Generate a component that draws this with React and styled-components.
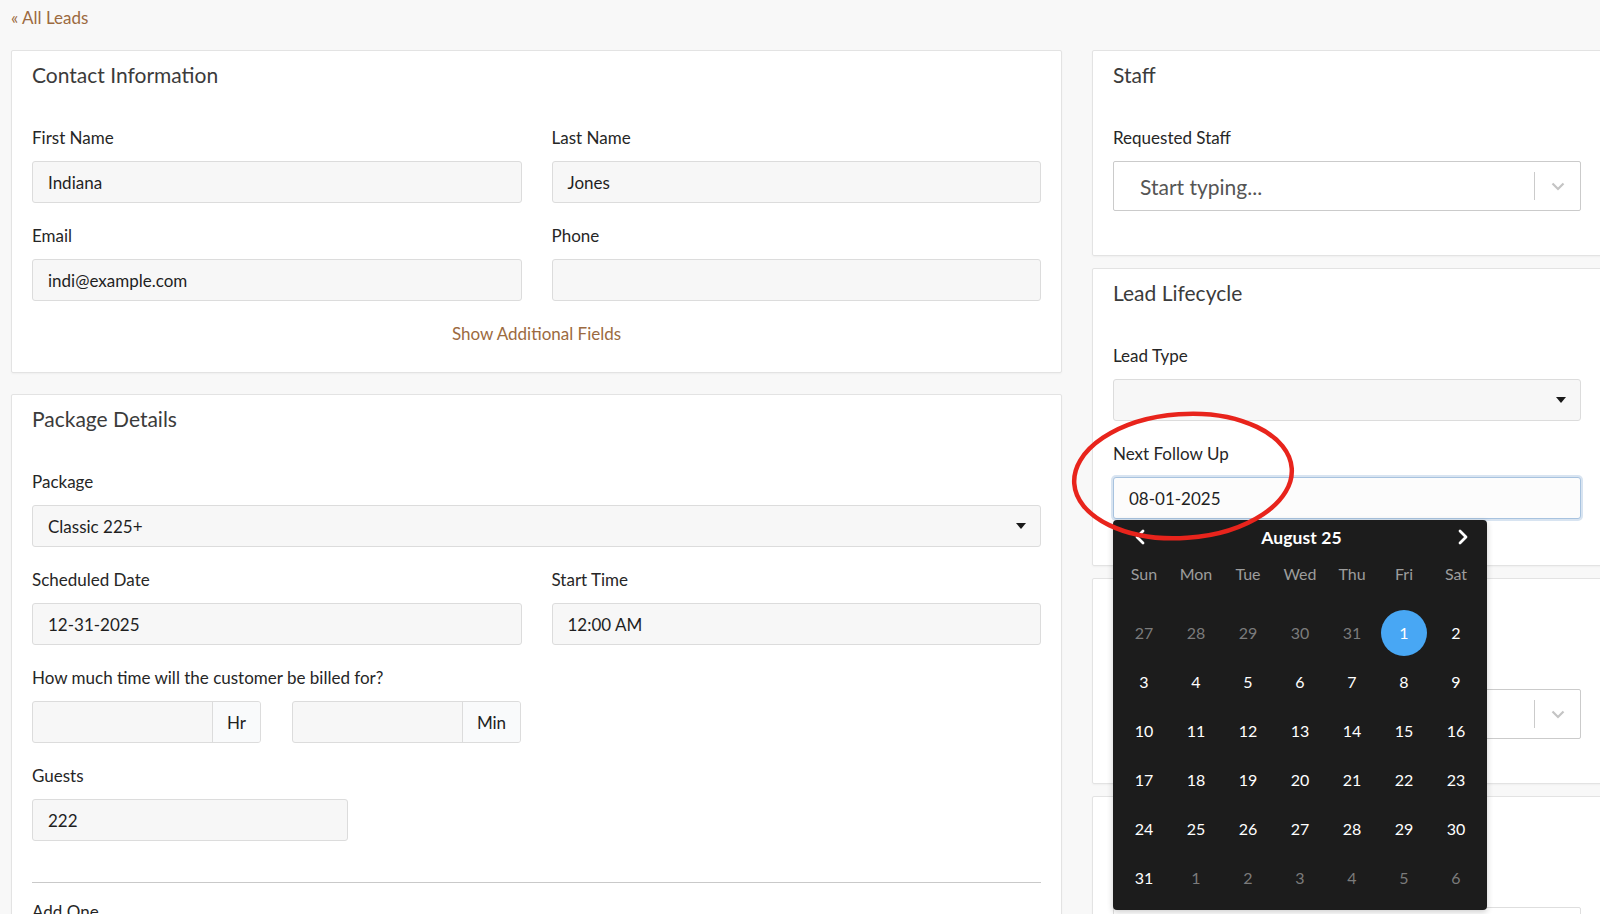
import React from 'react';
import styled, { createGlobalStyle } from 'styled-components';

const GlobalStyle = createGlobalStyle`
	body {
		margin: 0;
		background: #f8f8f8;
		font-family: Lato, 'Liberation Sans', Arial, sans-serif;
		color: #222;
	}
	* {
		box-sizing: border-box;
	}
`;

const weekDays = ['Sun', 'Mon', 'Tue', 'Wed', 'Thu', 'Fri', 'Sat'];

// august 2025, with the trailing days of july and september
const monthDays = [
	...[27, 28, 29, 30, 31].map((d) => ({ d, out: true })),
	...Array.from({ length: 31 }, (_, i) => ({ d: i + 1, selected: i === 0 })),
	...[1, 2, 3, 4, 5, 6].map((d) => ({ d, out: true })),
];

const CaretDown = () => <Caret />;

const ChevronDown = () => (
	<svg width='14' height='9' viewBox='0 0 14 9'>
		<polyline points='1.5,1.5 7,7 12.5,1.5' fill='none' stroke='#c4c4c4' strokeWidth='2.2' />
	</svg>
);

const Chevron = ({ dir }) => (
	<svg width='10' height='16' viewBox='0 0 10 16'>
		<polyline
			points={dir === 'left' ? '8,2 2,8 8,14' : '2,2 8,8 2,14'}
			fill='none'
			stroke='#fff'
			strokeWidth='2.8'
			strokeLinecap='round'
			strokeLinejoin='round'
		/>
	</svg>
);

const DatePicker = () => (
	<Calendar>
		<CalendarHead>
			<NavButton>
				<Chevron dir='left' />
			</NavButton>
			<MonthTitle>August 25</MonthTitle>
			<NavButton>
				<Chevron dir='right' />
			</NavButton>
		</CalendarHead>
		<WeekRow>
			{weekDays.map((w) => (
				<WeekDay key={w}>{w}</WeekDay>
			))}
		</WeekRow>
		<DayGrid>
			{monthDays.map((day, i) => (
				<DayCell key={i} $out={day.out}>
					{day.selected ? <SelectedDay>{day.d}</SelectedDay> : day.d}
				</DayCell>
			))}
		</DayGrid>
	</Calendar>
);

// cards further down the right column, mostly hidden by the open date picker
const HiddenCard = ({ plain }) => (
	<Card>
		<CardTitle aria-hidden />
		<Field $mb={18}>
			<Label aria-hidden />
			<Combo $plain={plain}>
				<Placeholder />
				{!plain && <ComboSep />}
				{!plain && (
					<ComboArrow>
						<ChevronDown />
					</ComboArrow>
				)}
			</Combo>
		</Field>
	</Card>
);

const App = () => {
	return (
		<Page>
			<GlobalStyle />
			<BackLink href='#'>« All Leads</BackLink>
			<Columns>
				<Column $gap={21}>
					<Card $pb={28}>
						<CardTitle>Contact Information</CardTitle>
						<Row>
							<Field>
								<Label>First Name</Label>
								<TextBox>Indiana</TextBox>
							</Field>
							<Field>
								<Label>Last Name</Label>
								<TextBox>Jones</TextBox>
							</Field>
						</Row>
						<Row>
							<Field>
								<Label>Email</Label>
								<TextBox>indi@example.com</TextBox>
							</Field>
							<Field>
								<Label>Phone</Label>
								<TextBox />
							</Field>
						</Row>
						<MoreLink href='#'>Show Additional Fields</MoreLink>
					</Card>

					<Card>
						<CardTitle>Package Details</CardTitle>
						<Field>
							<Label>Package</Label>
							<TextBox>
								<Grow>Classic 225+</Grow>
								<CaretDown />
							</TextBox>
						</Field>
						<Row>
							<Field>
								<Label>Scheduled Date</Label>
								<TextBox>12-31-2025</TextBox>
							</Field>
							<Field>
								<Label>Start Time</Label>
								<TextBox>12:00 AM</TextBox>
							</Field>
						</Row>
						<Field>
							<Label>How much time will the customer be billed for?</Label>
							<DurationRow>
								<InputGroup>
									<GroupInput />
									<Addon $width={48}>Hr</Addon>
								</InputGroup>
								<InputGroup>
									<GroupInput />
									<Addon $width={58}>Min</Addon>
								</InputGroup>
							</DurationRow>
						</Field>
						<Field $mb={41}>
							<Label>Guests</Label>
							<TextBox $width={316}>222</TextBox>
						</Field>
						<Divider />
						<Field>
							<Label>Add One</Label>
							<TextBox />
						</Field>
					</Card>
				</Column>

				<Column $gap={12}>
					<Card>
						<CardTitle>Staff</CardTitle>
						<Field $mb={18}>
							<Label>Requested Staff</Label>
							<Combo>
								<Placeholder>Start typing...</Placeholder>
								<ComboSep />
								<ComboArrow>
									<ChevronDown />
								</ComboArrow>
							</Combo>
						</Field>
					</Card>

					<Card>
						<CardTitle>Lead Lifecycle</CardTitle>
						<Field>
							<Label>Lead Type</Label>
							<TextBox>
								<Grow />
								<CaretDown />
							</TextBox>
						</Field>
						<PickerField>
							<Label>Next Follow Up</Label>
							<TextBox $focused>08-01-2025</TextBox>
							<DatePicker />
						</PickerField>
					</Card>

					<HiddenCard />
					<HiddenCard plain />
				</Column>
			</Columns>

			<Annotation width='236' height='142' viewBox='0 0 236 142'>
				<ellipse
					cx='118'
					cy='71'
					rx='109'
					ry='62'
					fill='none'
					stroke='#e8241c'
					strokeWidth='4.5'
					transform='rotate(-4 118 71)'
				/>
			</Annotation>
		</Page>
	);
};

export default App;

const Page = styled.div`
	position: relative;
	height: 914px;
	overflow: hidden;
	padding: 8px 0 0 11px;
`;

const BackLink = styled.a`
	display: block;
	height: 20px;
	margin-bottom: 22px;
	font-size: 17px;
	line-height: 20px;
	color: #9c6a40;
	text-decoration: none;
`;

const Columns = styled.div`
	display: grid;
	grid-template-columns: 1051px 510px;
	column-gap: 30px;
	align-items: start;
`;

const Column = styled.div`
	display: flex;
	flex-direction: column;
	gap: ${(p) => p.$gap}px;
`;

const Card = styled.section`
	background: #fff;
	border: 1px solid #e3e3e3;
	border-radius: 2px;
	box-shadow: 0 1px 2px rgba(0, 0, 0, 0.04);
	padding: 12px 20px ${(p) => p.$pb || 26}px;
`;

const CardTitle = styled.h2`
	height: 24px;
	margin: 0 0 41px;
	font-size: 21px;
	line-height: 24px;
	font-weight: 400;
	color: #3b3b3b;
`;

const Row = styled.div`
	display: grid;
	grid-template-columns: 1fr 1fr;
	column-gap: 30px;
`;

const Field = styled.div`
	margin-bottom: ${(p) => (p.$mb !== undefined ? p.$mb : 23)}px;
`;

const PickerField = styled(Field)`
	position: relative;
	margin-bottom: 20px;
`;

const Label = styled.label`
	display: block;
	height: 20px;
	margin-bottom: 13px;
	font-size: 17px;
	line-height: 20px;
	color: #262626;
`;

const TextBox = styled.div`
	display: flex;
	align-items: center;
	width: ${(p) => (p.$width ? `${p.$width}px` : '100%')};
	height: 42px;
	padding: 0 14px 0 15px;
	background: ${(p) => (p.$focused ? '#fcfcfc' : '#f7f7f7')};
	border: 1px solid ${(p) => (p.$focused ? '#a8c3df' : '#dcdcdc')};
	border-radius: 3px;
	box-shadow: ${(p) => (p.$focused ? '0 0 0 2px rgba(168, 195, 223, 0.45)' : 'none')};
	font-size: 17px;
	color: #1f1f1f;
`;

const Grow = styled.span`
	flex: 1;
`;

const Caret = styled.span`
	width: 0;
	height: 0;
	border-left: 5px solid transparent;
	border-right: 5px solid transparent;
	border-top: 6px solid #1a1a1a;
`;

const MoreLink = styled.a`
	display: block;
	text-align: center;
	font-size: 17px;
	line-height: 20px;
	color: #9c6a40;
	text-decoration: none;
`;

const DurationRow = styled.div`
	display: grid;
	grid-template-columns: 229px 229px;
	column-gap: 31px;
`;

const InputGroup = styled.div`
	display: flex;
	height: 42px;
	border: 1px solid #dcdcdc;
	border-radius: 3px;
	background: #f7f7f7;
	overflow: hidden;
`;

const GroupInput = styled.div`
	flex: 1;
`;

const Addon = styled.div`
	display: flex;
	align-items: center;
	justify-content: center;
	width: ${(p) => p.$width}px;
	border-left: 1px solid #dcdcdc;
	background: #f9fafb;
	font-size: 17px;
	color: #222;
`;

const Divider = styled.hr`
	margin: 0 0 19px;
	border: 0;
	border-top: 1px solid #c9c9c9;
`;

const Combo = styled.div`
	display: flex;
	align-items: center;
	height: 50px;
	background: #fff;
	border: 1px solid ${(p) => (p.$plain ? '#dedede' : '#cbcbcb')};
	border-radius: 2px;
`;

const Placeholder = styled.span`
	flex: 1;
	padding-left: 26px;
	font-size: 21px;
	color: #555;
`;

const ComboSep = styled.span`
	width: 1px;
	height: 28px;
	background: #cbcbcb;
`;

const ComboArrow = styled.span`
	display: flex;
	align-items: center;
	justify-content: center;
	width: 45px;
`;

const Calendar = styled.div`
	position: absolute;
	top: 76px;
	left: 0;
	z-index: 5;
	width: 374px;
	padding: 0 5px 8px;
	background: #1c1c1c;
	border-radius: 4px;
	box-shadow: 0 2px 6px rgba(0, 0, 0, 0.2);
	color: #fff;
`;

const CalendarHead = styled.div`
	display: flex;
	align-items: center;
	justify-content: space-between;
	height: 34px;
	padding: 0 14px 0 17px;
`;

const NavButton = styled.span`
	display: flex;
	align-items: center;
	height: 16px;
`;

const MonthTitle = styled.span`
	font-size: 17.5px;
	font-weight: 700;
	letter-spacing: 0.1px;
`;

const WeekRow = styled.div`
	display: grid;
	grid-template-columns: repeat(7, 52px);
	height: 36px;
	margin-top: 1px;
	margin-bottom: 17px;
`;

const WeekDay = styled.span`
	display: flex;
	align-items: center;
	justify-content: center;
	font-size: 16px;
	color: #9d9d9d;
`;

const DayGrid = styled.div`
	display: grid;
	grid-template-columns: repeat(7, 52px);
	grid-auto-rows: 49px;
`;

const DayCell = styled.span`
	display: flex;
	align-items: center;
	justify-content: center;
	font-size: 16px;
	color: ${(p) => (p.$out ? '#7b7b7b' : '#fff')};
`;

const SelectedDay = styled.span`
	display: flex;
	align-items: center;
	justify-content: center;
	width: 46px;
	height: 46px;
	border-radius: 50%;
	background: #48a7f4;
	color: #fff;
`;

const Annotation = styled.svg`
	position: absolute;
	left: 1065px;
	top: 405px;
	z-index: 10;
	pointer-events: none;
`;
